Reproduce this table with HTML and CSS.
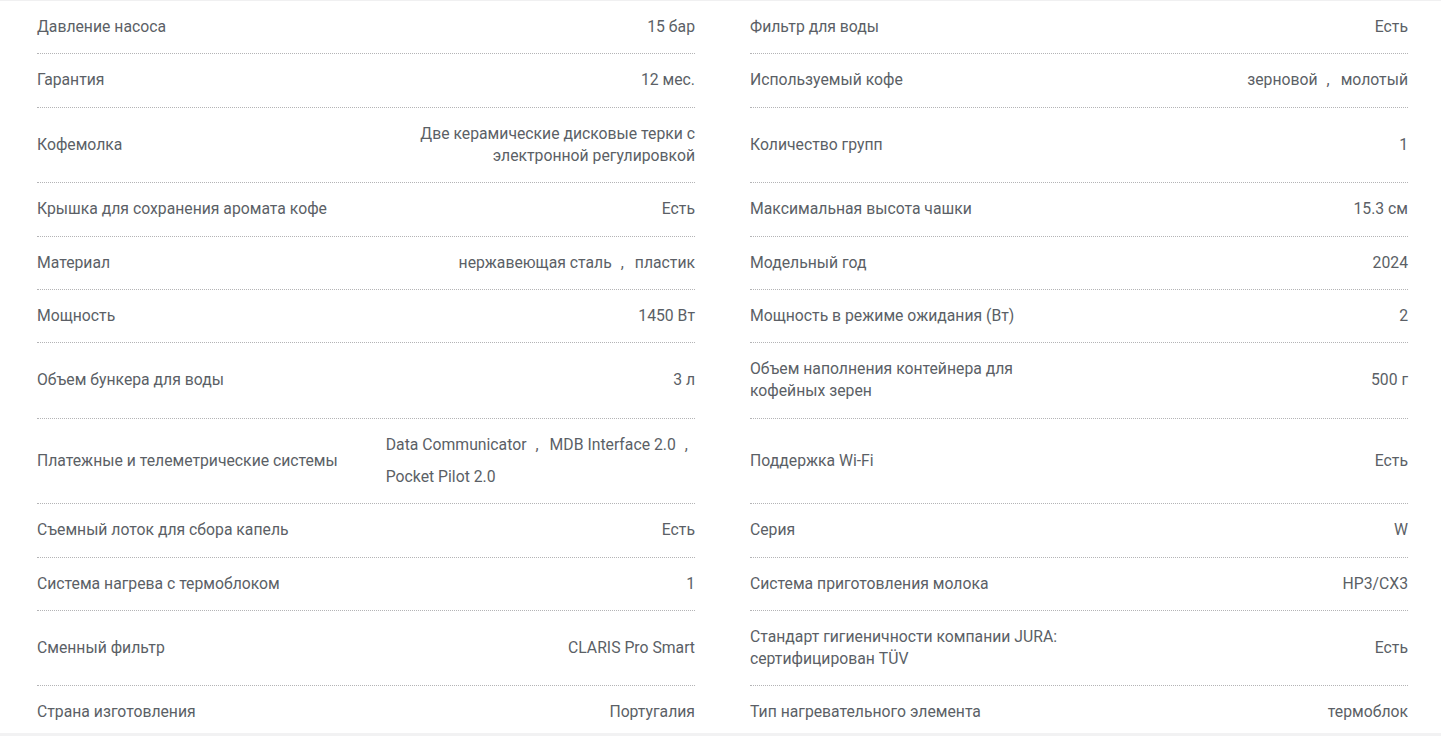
FILE: index.html
```html
<!DOCTYPE html>
<html lang="ru">
<head>
<meta charset="utf-8">
<title>Характеристики</title>
<link rel="stylesheet" href="styles.css">
</head>
<body>
<div class="page">
  <div class="specs">
    <div class="row"><div class="label">Давление насоса</div><div class="value">15 бар</div></div>
    <div class="row"><div class="label">Фильтр для воды</div><div class="value">Есть</div></div>

    <div class="row"><div class="label">Гарантия</div><div class="value">12 мес.</div></div>
    <div class="row"><div class="label">Используемый кофе</div><div class="value list"><span class="item">зерновой</span><span class="item">молотый</span></div></div>

    <div class="row"><div class="label">Кофемолка</div><div class="value">Две керамические дисковые терки с электронной регулировкой</div></div>
    <div class="row"><div class="label">Количество групп</div><div class="value">1</div></div>

    <div class="row"><div class="label">Крышка для сохранения аромата кофе</div><div class="value">Есть</div></div>
    <div class="row"><div class="label">Максимальная высота чашки</div><div class="value">15.3 см</div></div>

    <div class="row"><div class="label">Материал</div><div class="value list"><span class="item">нержавеющая сталь</span><span class="item">пластик</span></div></div>
    <div class="row"><div class="label">Модельный год</div><div class="value">2024</div></div>

    <div class="row"><div class="label">Мощность</div><div class="value">1450 Вт</div></div>
    <div class="row"><div class="label">Мощность в режиме ожидания (Вт)</div><div class="value">2</div></div>

    <div class="row"><div class="label">Объем бункера для воды</div><div class="value">3 л</div></div>
    <div class="row"><div class="label">Объем наполнения контейнера для кофейных зерен</div><div class="value">500 г</div></div>

    <div class="row"><div class="label">Платежные и телеметрические системы</div><div class="value list multi"><span class="item">Data Communicator</span><span class="item">MDB Interface 2.0</span><span class="item">Pocket Pilot 2.0</span></div></div>
    <div class="row"><div class="label">Поддержка Wi-Fi</div><div class="value">Есть</div></div>

    <div class="row"><div class="label">Съемный лоток для сбора капель</div><div class="value">Есть</div></div>
    <div class="row"><div class="label">Серия</div><div class="value">W</div></div>

    <div class="row"><div class="label">Система нагрева с термоблоком</div><div class="value">1</div></div>
    <div class="row"><div class="label">Система приготовления молока</div><div class="value">HP3/CX3</div></div>

    <div class="row"><div class="label">Сменный фильтр</div><div class="value">CLARIS Pro Smart</div></div>
    <div class="row"><div class="label">Стандарт гигиеничности компании JURA: сертифицирован TÜV</div><div class="value">Есть</div></div>

    <div class="row last"><div class="label">Страна изготовления</div><div class="value">Португалия</div></div>
    <div class="row last"><div class="label">Тип нагревательного элемента</div><div class="value">термоблок</div></div>
  </div>
</div>
</body>
</html>
```

FILE: styles.css
```css
html {
  background: #f2f2f3;
}

body {
  margin: 0;
  font-family: Roboto, "Noto Sans", Arial, sans-serif;
  font-size: 15.75px;
  line-height: 21.75px;
  color: #5b5f66;
}

.page {
  background: #ffffff;
  border-top: 1px solid #f0f0f1;
  height: 733px;
  box-sizing: border-box;
  overflow: hidden;
  padding: 0 33px 0 37px;
}

.specs {
  display: grid;
  grid-template-columns: 1fr 1fr;
  column-gap: 55px;
}

.row {
  display: flex;
  align-items: center;
  justify-content: space-between;
  gap: 16px;
  padding: 15px 0 15.7px;
  border-bottom: 1px dotted #b4b4b6;
}

.row.last {
  border-bottom: none;
  padding-bottom: 10px;
}

.label {
  flex: 0 1 auto;
  max-width: 50%;
}

.value {
  flex: 0 1 auto;
  max-width: 47%;
  text-align: right;
}

.list {
  display: flex;
  flex-wrap: wrap;
  justify-content: flex-end;
  row-gap: 10.65px;
  column-gap: 6px;
  text-align: left;
}

.list.multi {
  justify-content: flex-start;
}

.item:not(:last-child)::after {
  content: ",";
  margin: 0 5px 0 9px;
}
```
